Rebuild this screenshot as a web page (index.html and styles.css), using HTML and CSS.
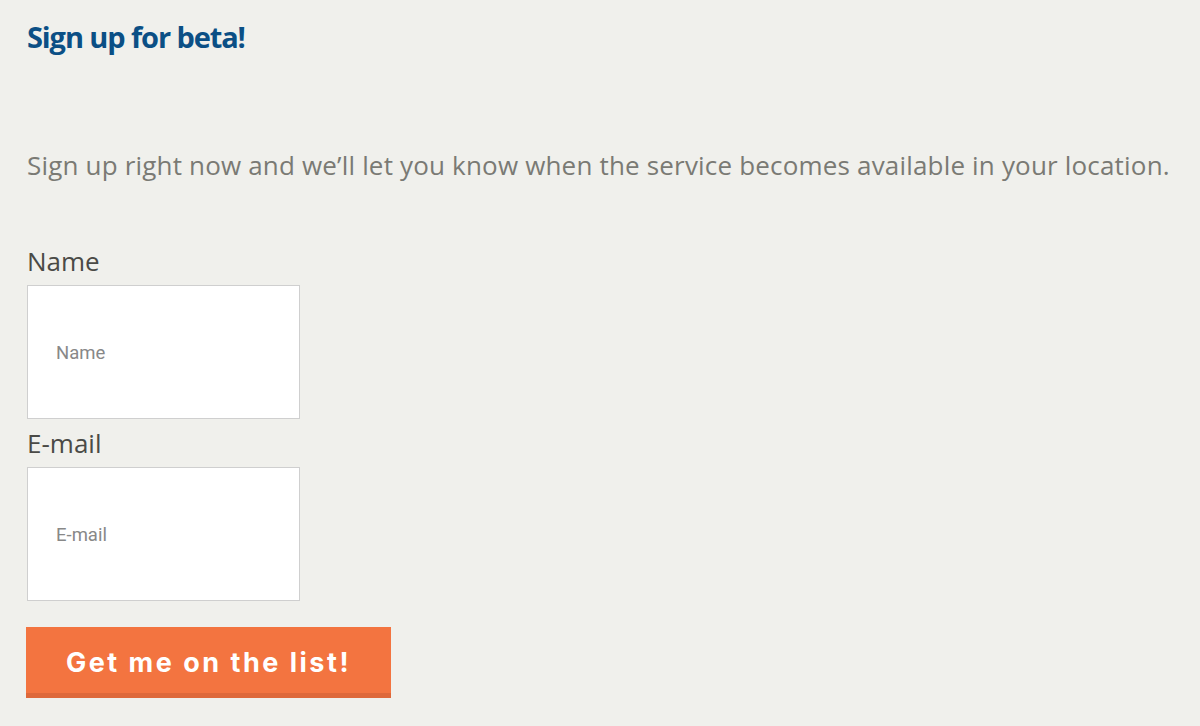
FILE: index.html
```html
<!DOCTYPE html>
<html lang="en">
<head>
<meta charset="utf-8">
<title>Sign up for beta</title>
<link rel="stylesheet" href="styles.css">
</head>
<body>
<main class="page">
  <h1 class="title">Sign up for beta!</h1>
  <p class="intro">Sign up right now and we’ll let you know when the service becomes available in your location.</p>
  <form class="form">
    <label class="label" for="name">Name</label>
    <input class="field" id="name" type="text" placeholder="Name">
    <label class="label" for="email">E-mail</label>
    <input class="field" id="email" type="email" placeholder="E-mail">
    <button class="btn" type="button">Get me on the list!</button>
  </form>
</main>
</body>
</html>
```

FILE: styles.css
```css
html, body {
  margin: 0;
  padding: 0;
  background: #f0f0ec;
}
.page {
  padding: 18px 26px 0 27px;
  font-family: "Open Sans", "Noto Sans", sans-serif;
}
.title {
  margin: 0;
  font-family: "Open Sans", sans-serif;
  font-weight: 700;
  font-size: 29px;
  line-height: 38px;
  letter-spacing: -1.1px;
  color: #0b4f85;
}
.intro {
  margin: 92px 0 0 0;
  font-size: 26px;
  line-height: 34px;
  color: #7a7a74;
  letter-spacing: 0.18px;
  white-space: nowrap;
}
.form {
  display: flex;
  flex-direction: column;
  align-items: flex-start;
  margin-top: 64px;
}
.label {
  font-size: 26px;
  line-height: 30px;
  color: #4a4a46;
  margin-bottom: 9px;
}
.field {
  box-sizing: border-box;
  width: 273px;
  height: 134px;
  border: 1px solid #cfcfcf;
  background: #fff;
  padding: 2px 28px 0 28px;
  font-family: "Roboto", sans-serif;
  font-size: 18.5px;
  color: #333;
  margin: 0 0 9px 0;
  outline: none;
}
.field::placeholder {
  color: #888;
}
.btn {
  margin-top: 17px;
  margin-left: -1px;
  box-sizing: border-box;
  width: 365px;
  height: 71px;
  border: none;
  border-bottom: 5px solid #de683a;
  background: #f37440;
  color: #fff;
  font-family: "Inter", "Roboto", sans-serif;
  font-weight: 700;
  font-size: 27px;
  letter-spacing: 2.5px;
  padding: 4px 0 0 0;
  cursor: pointer;
}
```
